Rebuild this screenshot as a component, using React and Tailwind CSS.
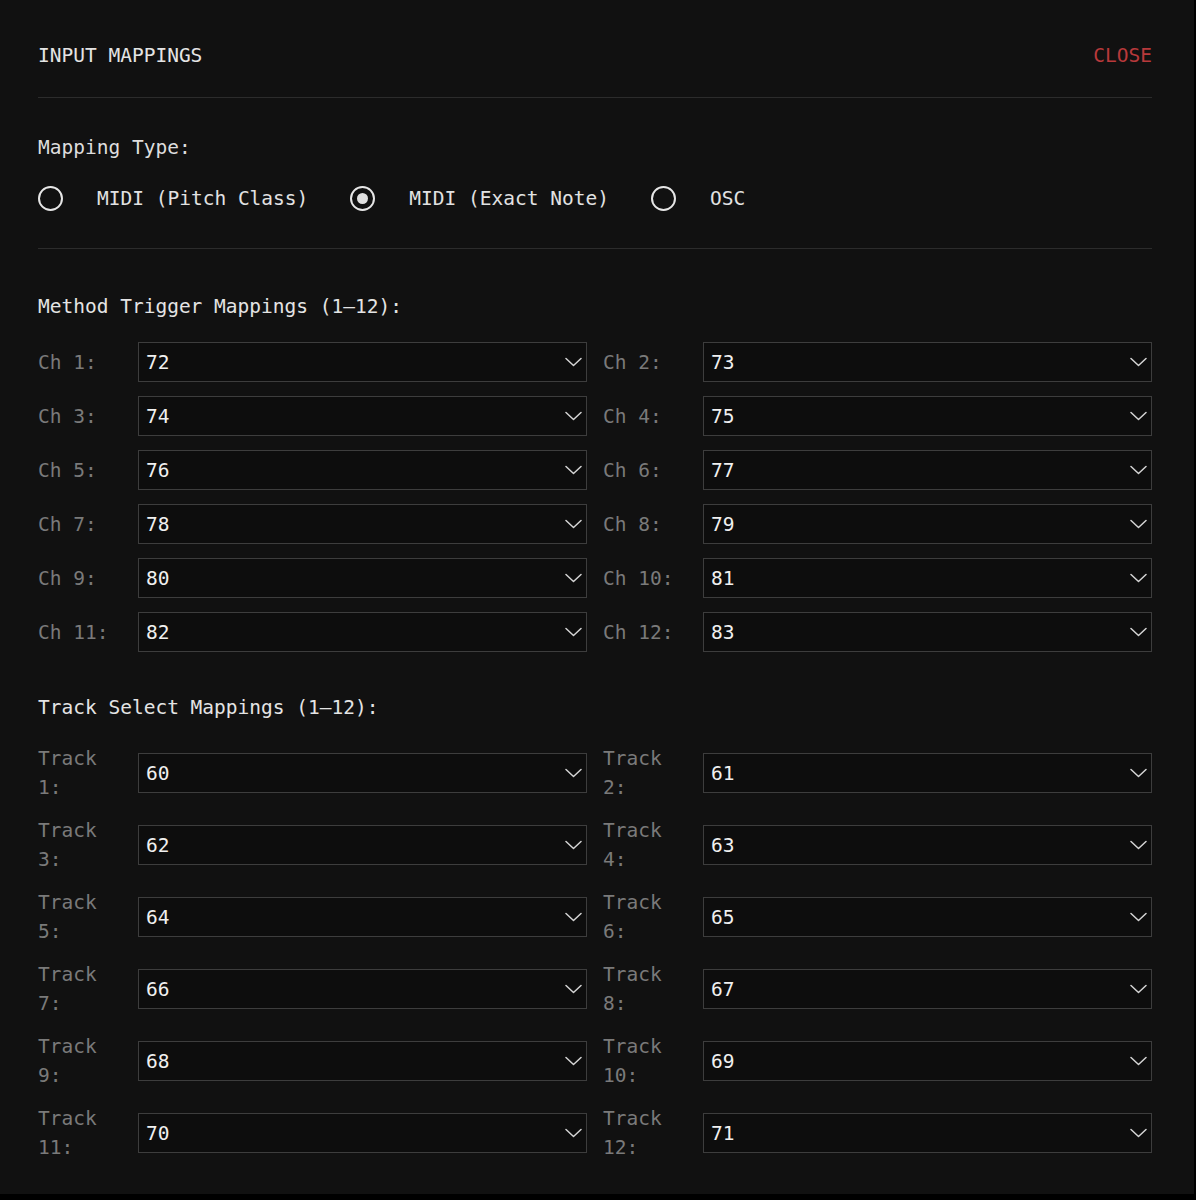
import React, { useState } from 'react';

const MONO = { fontFamily: '"DejaVu Sans Mono", "Liberation Mono", monospace' };

const methodMappings = [72, 73, 74, 75, 76, 77, 78, 79, 80, 81, 82, 83];
const trackMappings = [60, 61, 62, 63, 64, 65, 66, 67, 68, 69, 70, 71];

const Chevron = () => (
    <svg width="17" height="10" viewBox="0 0 17 10" fill="none" className="shrink-0">
        <polyline points="1,1.5 8.5,8.5 16,1.5" stroke="#d4d4d4" strokeWidth="1.5" strokeLinejoin="round" strokeLinecap="round" />
    </svg>
);

const Radio = ({ checked }) => (
    <span className="w-[25px] h-[25px] rounded-full border-2 border-[#e6e6e6] flex items-center justify-center shrink-0">
        {checked && <span className="w-[11px] h-[11px] rounded-full bg-[#e0e0e0]" />}
    </span>
);

const MappingRow = ({ label, value }) => (
    <div className="flex items-center">
        <div className="w-[100px] pr-[12px] shrink-0 text-[#7a7a7a] leading-[29px]">{label}</div>
        <div className="flex-1 h-[40px] border border-[#3d3d3d] bg-[#0d0d0d] flex items-center justify-between pl-[7px] pr-[4px] text-[#f0f0f0]">
            <span>{value}</span>
            <Chevron />
        </div>
    </div>
);

export default function App() {
    const [mappingType, setMappingType] = useState('exact');

    const types = [
        { id: 'pitch', label: 'MIDI (Pitch Class)' },
        { id: 'exact', label: 'MIDI (Exact Note)' },
        { id: 'osc', label: 'OSC' },
    ];

    return (
        <div className="w-full h-[1200px] bg-black" style={MONO}>
            <div className="w-[1194px] h-[1194px] bg-[#111111] pl-[38px] pr-[42px] pt-[41px] text-[19.5px] leading-[29px]">
                {/* Header */}
                <div className="flex justify-between items-center pb-[27px] border-b border-[#2c2c2c]">
                    <span className="text-[#e4e4e4]">INPUT MAPPINGS</span>
                    <span className="text-[#b8393b]">CLOSE</span>
                </div>

                {/* Mapping type */}
                <div className="pt-[35px] pb-[35px] border-b border-[#2c2c2c]">
                    <div className="text-[#dedede]">Mapping Type:</div>
                    <div className="flex items-center mt-[22px] text-[#e2e2e2]">
                        {types.map((t) => (
                            <label key={t.id} className="flex items-center mr-[42px] cursor-pointer" onClick={() => setMappingType(t.id)}>
                                <Radio checked={mappingType === t.id} />
                                <span className="ml-[34px]">{t.label}</span>
                            </label>
                        ))}
                    </div>
                </div>

                {/* Method trigger mappings */}
                <div className="mt-[43px] text-[#e4e4e4]">Method Trigger Mappings (1–12):</div>
                <div className="grid grid-cols-2 gap-x-[16px] gap-y-[14px] mt-[21px]">
                    {methodMappings.map((v, i) => (
                        <MappingRow key={i} label={`Ch ${i + 1}:`} value={v} />
                    ))}
                </div>

                {/* Track select mappings */}
                <div className="mt-[41px] text-[#e4e4e4]">Track Select Mappings (1–12):</div>
                <div className="grid grid-cols-2 gap-x-[16px] gap-y-[14px] mt-[22px]">
                    {trackMappings.map((v, i) => (
                        <MappingRow key={i} label={`Track ${i + 1}:`} value={v} />
                    ))}
                </div>
            </div>
        </div>
    );
}
